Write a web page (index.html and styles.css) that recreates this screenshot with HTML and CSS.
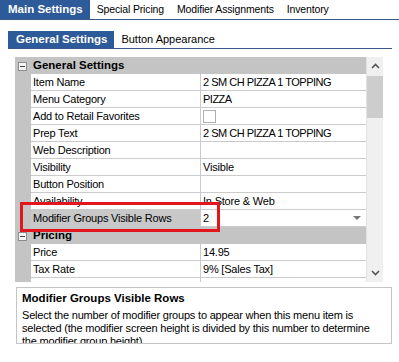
FILE: index.html
```html
<!DOCTYPE html>
<html>
<head>
<meta charset="utf-8">
<link rel="stylesheet" href="styles.css">
</head>
<body>
<div class="tabs">
  <div class="tab active">Main Settings</div>
  <div class="tab">Special Pricing</div>
  <div class="tab">Modifier Assignments</div>
  <div class="tab">Inventory</div>
</div>
<div class="subtabs">
  <div class="tab active">General Settings</div>
  <div class="tab">Button Appearance</div>
</div>
<div class="grid">
  <div class="rows">
    <div class="row cat"><div class="gut"><span class="minus"></span></div><div class="catname">General Settings</div></div>
    <div class="row"><div class="gut"></div><div class="name">Item Name</div><div class="val caps">2 SM CH PIZZA 1 TOPPING</div></div>
    <div class="row"><div class="gut"></div><div class="name">Menu Category</div><div class="val caps">PIZZA</div></div>
    <div class="row"><div class="gut"></div><div class="name">Add to Retail Favorites</div><div class="val"><span class="check"></span></div></div>
    <div class="row"><div class="gut"></div><div class="name">Prep Text</div><div class="val caps">2 SM CH PIZZA 1 TOPPING</div></div>
    <div class="row"><div class="gut"></div><div class="name">Web Description</div><div class="val"></div></div>
    <div class="row"><div class="gut"></div><div class="name">Visibility</div><div class="val">Visible</div></div>
    <div class="row"><div class="gut"></div><div class="name">Button Position</div><div class="val"></div></div>
    <div class="row"><div class="gut"></div><div class="name">Availability</div><div class="val">In Store &amp; Web</div></div>
    <div class="row sel"><div class="gut"></div><div class="name">Modifier Groups Visible Rows</div><div class="val drop">2<span class="arrow"></span></div></div>
    <div class="row cat"><div class="gut"><span class="minus"></span></div><div class="catname">Pricing</div></div>
    <div class="row"><div class="gut"></div><div class="name">Price</div><div class="val">14.95</div></div>
    <div class="row"><div class="gut"></div><div class="name">Tax Rate</div><div class="val">9% [Sales Tax]</div></div>
    <div class="row"><div class="gut"></div><div class="name"></div><div class="val"></div></div>
  </div>
  <div class="scroll">
    <div class="sbtn"><svg width="9" height="6" viewBox="0 0 9 6"><path d="M1 5 L4.5 1.5 L8 5" fill="none" stroke="#555" stroke-width="1.6"/></svg></div>
    <div class="track"><div class="thumb"></div></div>
    <div class="sbtn"><svg width="9" height="6" viewBox="0 0 9 6"><path d="M1 1 L4.5 4.5 L8 1" fill="none" stroke="#555" stroke-width="1.6"/></svg></div>
  </div>
</div>
<div class="desc">
  <div class="dtitle">Modifier Groups Visible Rows</div>
  <p class="dtext">Select the number of modifier groups to appear when this menu item is selected (the modifier screen height is divided by this number to determine the modifier group height).</p>
</div>
<div class="highlight"></div>
</body>
</html>
```

FILE: styles.css
```css
html, body {
  margin: 0;
  padding: 0;
}
body {
  width: 399px;
  height: 362px;
  overflow: hidden;
  position: relative;
  background: #fff;
  color: #000;
  font-family: "Liberation Sans", Arial, sans-serif;
  font-size: 11px;
}
.tabs {
  display: flex;
  height: 19px;
  border-bottom: 1px solid #3a5a86;
}
.tab {
  padding: 0 6.5px;
  line-height: 19px;
  font-size: 10.5px;
  letter-spacing: -0.15px;
  white-space: nowrap;
}
.tab.active {
  background: #2d5a98;
  color: #fff;
  font-weight: bold;
  font-size: 11.5px;
  letter-spacing: 0;
  padding: 0 7px 0 8px;
  margin-right: 0.5px;
}
.subtabs {
  display: flex;
  height: 17px;
  margin: 11px 7px 0 8px;
  border-bottom: 1px solid #3a5a86;
}
.subtabs .tab {
  line-height: 17px;
  font-size: 11px;
  letter-spacing: 0;
}
.subtabs .tab.active {
  font-size: 11.5px;
}
.grid {
  display: flex;
  margin: 8px 16px 0 15px;
  height: 225px;
  overflow: hidden;
}
.rows {
  flex: 1;
  display: flex;
  flex-direction: column;
}
.row {
  display: flex;
  height: 17px;
  flex: none;
}
.gut {
  width: 16px;
  flex: none;
  background: #c4c4c4;
  position: relative;
}
.name, .val {
  height: 16px;
  line-height: 16px;
  border-bottom: 1px solid #cbcbcb;
  white-space: nowrap;
  overflow: hidden;
  letter-spacing: -0.2px;
}
.name {
  width: 167px;
  padding-left: 2px;
  border-right: 1px solid #cbcbcb;
}
.val {
  flex: 1;
  padding-left: 2px;
  position: relative;
}
.val.caps {
  letter-spacing: -0.5px;
}
.cat {
  background: #c4c4c4;
}
.catname {
  flex: 1;
  font-weight: bold;
  font-size: 11.5px;
  line-height: 17px;
  padding-left: 2px;
}
.minus {
  position: absolute;
  left: 3px;
  top: 5px;
  width: 7px;
  height: 7px;
  border: 1px solid #8c8c8c;
  background: #f4f4f4;
}
.minus::after {
  content: "";
  position: absolute;
  left: 1px;
  top: 3px;
  width: 5px;
  height: 1px;
  background: #444;
}
.sel .name {
  background: #c8c8c8;
}
.check {
  display: inline-block;
  width: 11px;
  height: 11px;
  border: 1px solid #b0b0b0;
  margin-top: 2px;
  vertical-align: top;
}
.arrow {
  position: absolute;
  right: 5px;
  top: 6px;
  width: 0;
  height: 0;
  border-left: 4px solid transparent;
  border-right: 4px solid transparent;
  border-top: 4px solid #777;
}
.scroll {
  width: 16px;
  flex: none;
  display: flex;
  flex-direction: column;
  background: #f0f0f0;
  border-left: 1px solid #e2e2e2;
}
.sbtn {
  height: 18px;
  display: flex;
  align-items: center;
  justify-content: center;
  flex: none;
}
.track {
  flex: 1;
  display: flex;
  flex-direction: column;
}
.thumb {
  margin: 1px 0 0 0;
  height: 42px;
  background: #cdcdcd;
}
.desc {
  margin: 5px 7px 0 16px;
  height: 57px;
  box-sizing: border-box;
  border: 1px solid #c4c4c4;
  padding: 3px 5px 0 5px;
  overflow: hidden;
}
.dtitle {
  font-weight: bold;
  font-size: 11.5px;
  line-height: 15px;
  margin-bottom: 3px;
}
.dtext {
  margin: 0;
  line-height: 13px;
  letter-spacing: -0.2px;
}
.highlight {
  position: absolute;
  left: 20px;
  top: 202px;
  width: 200px;
  height: 30px;
  box-sizing: border-box;
  border: 3px solid #e3161e;
}
```
